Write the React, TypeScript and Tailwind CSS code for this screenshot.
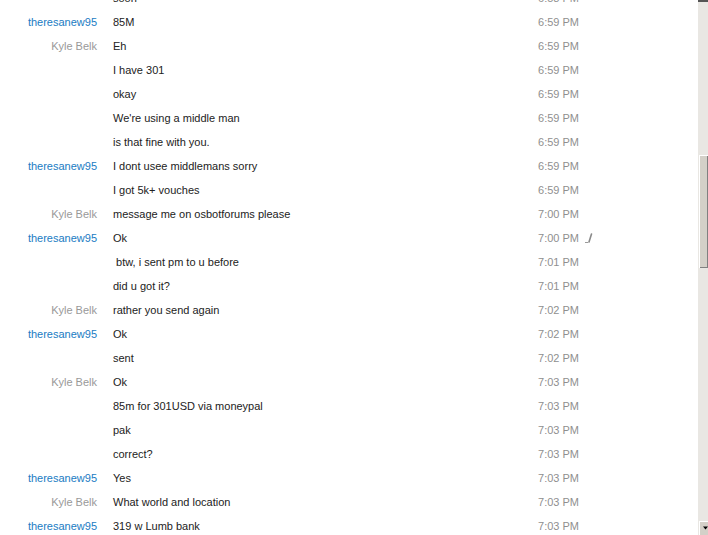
import React from "react";

type Row = { name?: string; me?: boolean; text: string; time: string; edited?: boolean };

const rows: Row[] = [
  { text: "soon", time: "6:58 PM" },
  { name: "theresanew95", me: true, text: "85M", time: "6:59 PM" },
  { name: "Kyle Belk", text: "Eh", time: "6:59 PM" },
  { text: "I have 301", time: "6:59 PM" },
  { text: "okay", time: "6:59 PM" },
  { text: "We're using a middle man", time: "6:59 PM" },
  { text: "is that fine with you.", time: "6:59 PM" },
  { name: "theresanew95", me: true, text: "I dont usee middlemans sorry", time: "6:59 PM" },
  { text: "I got 5k+ vouches", time: "6:59 PM" },
  { name: "Kyle Belk", text: "message me on osbotforums please", time: "7:00 PM" },
  { name: "theresanew95", me: true, text: "Ok", time: "7:00 PM", edited: true },
  { text: "\u00a0btw, i sent pm to u before", time: "7:01 PM" },
  { text: "did u got it?", time: "7:01 PM" },
  { name: "Kyle Belk", text: "rather you send again", time: "7:02 PM" },
  { name: "theresanew95", me: true, text: "Ok", time: "7:02 PM" },
  { text: "sent", time: "7:02 PM" },
  { name: "Kyle Belk", text: "Ok", time: "7:03 PM" },
  { text: "85m for 301USD via moneypal", time: "7:03 PM" },
  { text: "pak", time: "7:03 PM" },
  { text: "correct?", time: "7:03 PM" },
  { name: "theresanew95", me: true, text: "Yes", time: "7:03 PM" },
  { name: "Kyle Belk", text: "What world and location", time: "7:03 PM" },
  { name: "theresanew95", me: true, text: "319 w Lumb bank", time: "7:03 PM" },
];

export default function App() {
  return (
    <div
      className="flex h-[535px] w-[708px] overflow-hidden bg-white text-[11px]"
      style={{ fontFamily: "Tahoma, 'Liberation Sans', Arial, sans-serif" }}
    >
      <div className="w-[698px] shrink-0">
        <div className="-mt-[14px] flex flex-col">
          {rows.map((r, i) => (
            <div key={i} className="flex h-[24px] items-center leading-[13px]">
              <div
                className={
                  "w-[97px] shrink-0 text-right " +
                  (r.me ? "text-[#1a7cc3]" : "text-[#999999]")
                }
              >
                {r.name ?? ""}
              </div>
              <div className="ml-[16px] w-[396px] shrink-0 whitespace-pre text-[#222222]">{r.text}</div>
              <div className="w-[70px] shrink-0 text-right text-[#8f8f8f]">{r.time}</div>
              <div className="ml-[6px] flex w-[16px] shrink-0 items-center">
                {r.edited && (
                  <svg width="8" height="12" viewBox="0 0 8 12">
                    <path d="M0 10.5 H3" stroke="#9a9a9a" strokeWidth="1" />
                    <path d="M4 10 L6.5 2" stroke="#8a8a8a" strokeWidth="1.6" strokeLinecap="round" />
                  </svg>
                )}
              </div>
            </div>
          ))}
        </div>
      </div>
      <div className="relative h-[535px] w-[10px] shrink-0 bg-[#e9e7e3]">
        <div className="h-[2px] w-full bg-[#555555]" />
        <div className="absolute left-[1px] top-[155px] h-[113px] w-[9px] border-l border-t border-white bg-[#d4d0c8] shadow-[inset_-1px_-1px_0_#808080]" />
        <div className="absolute left-[1px] top-[521px] flex h-[16px] w-[9px] items-start justify-center border-l border-t border-white bg-[#d4d0c8] pt-[4px] pl-[3px]">
          <svg width="7" height="4" viewBox="0 0 7 4">
            <path d="M0 0 H7 L3.5 4 Z" fill="#000" />
          </svg>
        </div>
      </div>
    </div>
  );
}
